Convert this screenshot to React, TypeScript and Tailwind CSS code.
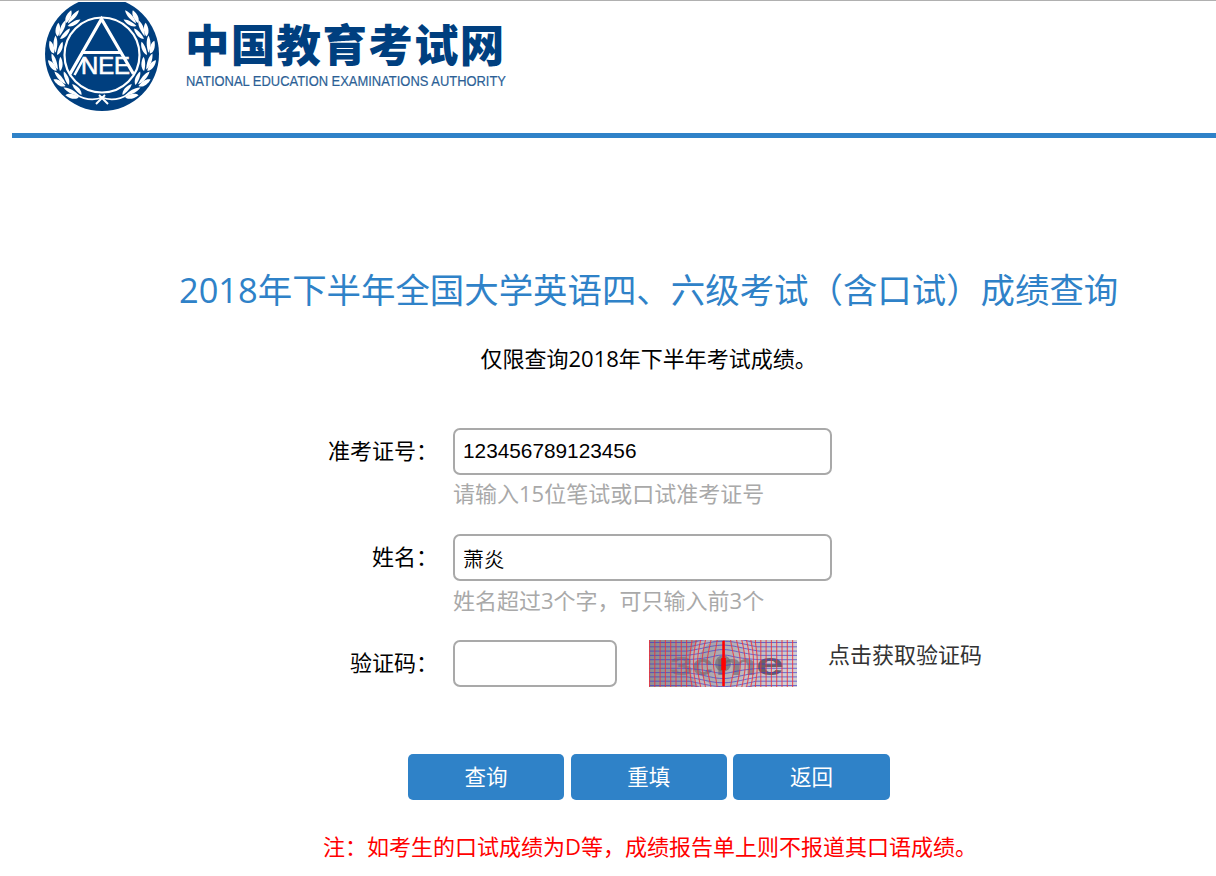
import React from "react";

const RAD = Math.PI / 180;

function Wreath({ flip }: { flip?: boolean }) {
  const steps = [126, 147, 168, 189, 210, 229];
  return (
    <g transform={flip ? "translate(114 0) scale(-1 1)" : undefined} fill="#fff">
      {steps.map((a) => {
        const x = 57 + 46.5 * Math.cos(a * RAD);
        const y = 55 + 46.5 * Math.sin(a * RAD);
        return (
          <g key={a} transform={`translate(${x} ${y}) rotate(${a + 90})`}>
            <path d="M-6 -1C-6 -5 0 -8 6 -7.500C5 -4 0 -1 -6 -1Z" />
            <path d="M-5 0.300C-1 -3 6 -4.500 12 -2.500C8 1 1 1.300 -5 0.300Z" />
            <path d="M-7 2C-3 1.500 4 2.500 7 5.500C2 7.500 -5 6 -7 2Z" />
          </g>
        );
      })}
      <path d="M30 94Q45 103 58 97" fill="none" stroke="#fff" strokeWidth="1.800" />
      <path d="M51 104L60 95" stroke="#fff" strokeWidth="2" />
    </g>
  );
}

function Emblem() {
  return (
    <svg width="114" height="110" viewBox="0 1 114 110" className="block shrink-0">
      <defs>
        <clipPath id="flatTop">
          <rect x="0" y="2" width="114" height="110" />
        </clipPath>
        <clipPath id="disc">
          <circle cx="57" cy="54" r="56" />
        </clipPath>
      </defs>
      <g clipPath="url(#flatTop)">
        <circle cx="57" cy="54" r="57" fill="#003f7f" />
        <g clipPath="url(#disc)">
          <Wreath />
          <Wreath flip />
        </g>
        <circle cx="57" cy="55" r="37.5" fill="#003f7f" stroke="#fff" strokeWidth="2.200" />
        <path d="M25 74L56.500 19L88.500 74M36 52.500H77" fill="none" stroke="#fff" strokeWidth="3.200" />
        <path d="M29.500 75L38.500 58.500" stroke="#fff" strokeWidth="2.600" />
        <text x="36" y="74" fontSize="23" textLength="49" lengthAdjust="spacingAndGlyphs" fill="#fff" stroke="#fff" strokeWidth="0.600" className="font-['Liberation_Sans',sans-serif] font-normal">NEE</text>
      </g>
    </svg>
  );
}

/* Lens distortion around the middle of the grid */
function bulge(x: number, y: number): string {
  const dx = x - 74;
  const dy = y - 23.5;
  const r = Math.hypot(dx, dy);
  if (r > 38 || r === 0) return `${x},${y}`;
  const k = Math.pow(r / 38, -0.35);
  return `${(74 + dx * k).toFixed(1)},${(23.5 + dy * k).toFixed(1)}`;
}

function Captcha() {
  const reds = Array.from({ length: 28 }, (_, i) => 0.5 + i * 5.3);
  const blues = Array.from({ length: 11 }, (_, i) => 2.5 + i * 4.3);
  const ys = Array.from({ length: 24 }, (_, i) => i * 2.1);
  const xs = Array.from({ length: 75 }, (_, i) => i * 2);
  return (
    <svg width="148" height="47" viewBox="0 0 148 47" className="block shrink-0">
      <defs>
        <linearGradient id="shade" x1="0" x2="1" y1="0" y2="0.1">
          <stop offset="0" stopColor="#88888d" />
          <stop offset="0.5" stopColor="#aeabb0" />
          <stop offset="1" stopColor="#d2d0d4" />
        </linearGradient>
      </defs>
      <rect width="148" height="47" fill="url(#shade)" />
      <circle cx="74" cy="23.5" r="29" fill="none" stroke="#d0c8d0" strokeWidth="9" opacity="0.5" />
      <circle cx="74" cy="23.5" r="8" fill="#77757c" opacity="0.8" />
      <g className="font-['Liberation_Sans',sans-serif] font-bold" fill="#66636b">
        <text x="21" y="35" fontSize="25" textLength="23" lengthAdjust="spacingAndGlyphs" opacity="0.45">3</text>
        <text x="43" y="35" fontSize="29" textLength="21" lengthAdjust="spacingAndGlyphs" opacity="0.6">c</text>
        <text x="66" y="35" fontSize="30" textLength="42" lengthAdjust="spacingAndGlyphs" opacity="0.6">m</text>
        <text x="107" y="35" fontSize="31" textLength="28" lengthAdjust="spacingAndGlyphs">e</text>
      </g>
      {blues.map((y) => (
        <polyline key={y} points={xs.map((x) => bulge(x, y)).join(" ")} fill="none" stroke="#3c35cf" strokeWidth="0.9" opacity="0.75" />
      ))}
      {reds.map((x) => (
        <polyline key={x} points={ys.map((y) => bulge(x, y)).join(" ")} fill="none" stroke="#f0303a" strokeWidth="1.100" opacity="0.8" />
      ))}
      <path d="M74.500 1V46" stroke="#f00" strokeWidth="2.500" />
      <path d="M74.500 18V30" stroke="#f00" strokeWidth="4.500" />
    </svg>
  );
}

const inputBox =
  "h-[47px] rounded-[7px] border-2 border-[#a9a9a9] bg-white pl-2 pr-2 text-[20.800px] text-black outline-none font-['Liberation_Sans','Noto_Sans_CJK_SC',sans-serif] font-[350]";

function Label({ children }: { children: React.ReactNode }) {
  return <label className="mt-[5px] w-[111px] shrink-0 text-right leading-[34px]">{children}</label>;
}

export default function App() {
  return (
    <div className="h-[876px] overflow-hidden border-t border-[#b0b0b0] bg-white text-[22px] text-black font-['Open_Sans','Noto_Sans_CJK_SC',sans-serif] font-normal">
      <header className="ml-3 flex h-[137px] border-b-[5px] border-[#2f82c8] pl-[33px]">
        <Emblem />
        <div className="ml-[26px] mt-[14px] text-[#003f7f]">
          <div className="h-[55px] whitespace-nowrap text-[44.500px] font-black leading-[55px] tracking-[1.300px] font-['Noto_Sans_CJK_SC',sans-serif]">中国教育考试网</div>
          <svg width="324" height="18" className="ml-px block overflow-visible">
            <text x="0" y="15.500" fontSize="15.500" textLength="320" lengthAdjust="spacingAndGlyphs" fill="#2c5f96" stroke="#2c5f96" strokeWidth="0.2" className="font-['Liberation_Sans',sans-serif] font-normal">NATIONAL EDUCATION EXAMINATIONS AUTHORITY</text>
          </svg>
        </div>
      </header>

      <main className="ml-3 flex flex-col">
        <h1 className="mt-[128px] whitespace-nowrap pl-[167px] text-[34.430px] leading-[48px] text-[#2f82c8]">2018年下半年全国大学英语四、六级考试（含口试）成绩查询</h1>
        <p className="mt-[28px] pl-[468.500px] leading-[32px]">仅限查询2018年下半年考试成绩。</p>

        <form className="mt-[54px] flex flex-col pl-[315px]" onSubmit={(e) => e.preventDefault()}>
          <div className="flex h-[106px]">
            <Label>准考证号：</Label>
            <div className="ml-[15px]">
              <input className={`${inputBox} block w-[379px] pb-[2px]`} defaultValue="123456789123456" />
              <p className="mt-[2px] leading-[32px] text-[#a9a9a9]">请输入15位笔试或口试准考证号</p>
            </div>
          </div>
          <div className="flex h-[106px]">
            <Label>姓名：</Label>
            <div className="ml-[15px]">
              <input className={`${inputBox} block w-[379px]`} defaultValue="萧炎" />
              <p className="mt-[3px] leading-[32px] text-[#a9a9a9]">姓名超过3个字，可只输入前3个</p>
            </div>
          </div>
          <div className="flex h-[114px]">
            <Label>验证码：</Label>
            <input className={`${inputBox} ml-[15px] w-[164px]`} />
            <div className="ml-8">
              <Captcha />
            </div>
            <span className="-mt-[2px] ml-[31px] leading-[32px] text-[#333]">点击获取验证码</span>
          </div>
        </form>

        <div className="flex gap-[6.500px] pl-[396px] text-[21.500px] text-white">
          {["查询", "重填", "返回"].map((t) => (
            <button key={t} className="h-[46px] w-[156.200px] rounded-[5px] bg-[#2f82c8]">{t}</button>
          ))}
        </div>
        <p className="mt-[30px] whitespace-nowrap pl-[311px] leading-[32px] text-[#f00]">注：如考生的口试成绩为D等，成绩报告单上则不报道其口语成绩。</p>
      </main>
    </div>
  );
}
